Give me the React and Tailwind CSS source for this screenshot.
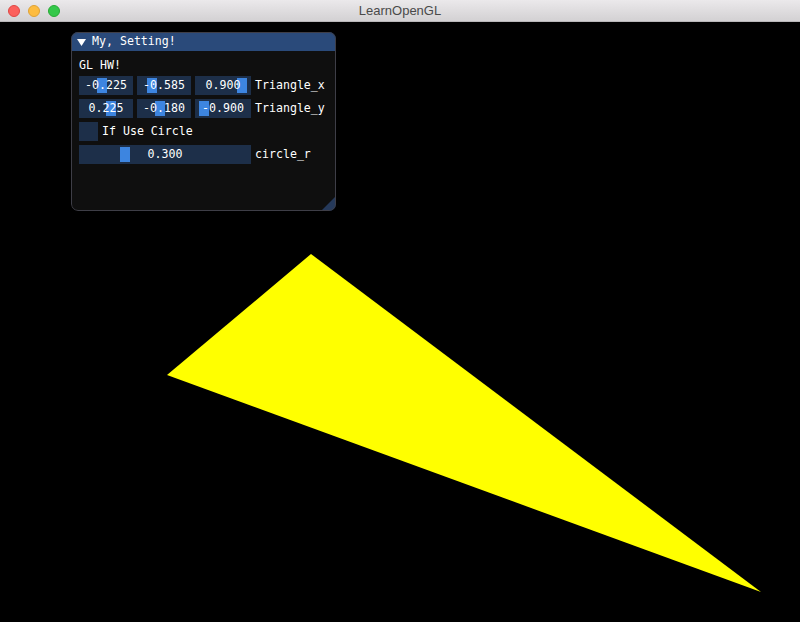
import React from "react";

const mono = { fontFamily: '"DejaVu Sans Mono", "Liberation Mono", monospace' };

function Slider({ width, value, t }) {
  const left = 2 + t * (width - 14);
  return (
    <div className="relative h-[19px] bg-[#1d2f49] shrink-0" style={{ width }}>
      <div className="absolute top-[2px] bottom-[2px] w-[10px] bg-[#3d85e0]" style={{ left }} />
      <div className="relative h-full flex items-center justify-center text-white text-[11.6px] leading-none">
        {value}
      </div>
    </div>
  );
}

function Row3({ vals, label }) {
  return (
    <div className="flex items-center h-[19px]">
      <div className="flex gap-[4px]">
        {vals.map((v, i) => (
          <Slider key={i} width={i === 2 ? 56 : 54} value={v.toFixed(3)} t={(v + 1) / 2} />
        ))}
      </div>
      <span className="ml-[4px] text-white text-[11.6px] leading-none">{label}</span>
    </div>
  );
}

export default function App() {
  return (
    <div className="w-[800px] h-[622px] bg-black flex flex-col overflow-hidden">
      <div className="h-[22px] shrink-0 relative flex items-center justify-center bg-gradient-to-b from-[#ebe9eb] to-[#d3d1d3] border-b border-[#b9b7b9]">
        <div className="absolute left-[8px] top-[5px] flex gap-[8px]">
          <div className="w-[12px] h-[12px] rounded-full bg-[#fc605c] border border-[#df4744]" />
          <div className="w-[12px] h-[12px] rounded-full bg-[#fdbc40] border border-[#dea236]" />
          <div className="w-[12px] h-[12px] rounded-full bg-[#34c84a] border border-[#27aa35]" />
        </div>
        <span className="text-[13px] text-[#4a4a4a] leading-none" style={{ fontFamily: '"Liberation Sans", Arial, sans-serif' }}>
          LearnOpenGL
        </span>
      </div>
      <div className="relative flex-1">
        <svg className="absolute inset-0" width="800" height="600" viewBox="0 0 800 600">
          <polygon points="311,232 167,353 761,570" fill="#ffff00" />
        </svg>
        <div
          className="absolute left-[71px] top-[10px] w-[265px] h-[179px] rounded-[7px] overflow-hidden bg-[#0f0f0f] flex flex-col"
          style={mono}
        >
          <div className="h-[19px] shrink-0 bg-[#2a4a7a] flex items-center pl-[6px]">
            <svg width="9" height="7" viewBox="0 0 9 7" className="mt-[1px]">
              <polygon points="0,0 9,0 4.5,7" fill="#ffffff" />
            </svg>
            <span className="ml-[6px] text-white text-[11.6px] leading-none">My, Setting!</span>
          </div>
          <div className="flex flex-col gap-[4px] pl-[8px] pt-[8px]">
            <div className="h-[13px] flex items-center text-white text-[11.6px] leading-none">GL HW!</div>
            <Row3 vals={[-0.225, -0.585, 0.9]} label="Triangle_x" />
            <Row3 vals={[0.225, -0.18, -0.9]} label="Triangle_y" />
            <div className="flex items-center h-[19px]">
              <div className="w-[19px] h-[19px] bg-[#1d2f49]" />
              <span className="ml-[4px] text-white text-[11.6px] leading-none">If Use Circle</span>
            </div>
            <div className="flex items-center h-[19px]">
              <div className="relative h-[19px] w-[172px] bg-[#1d2f49]">
                <div className="absolute top-[2px] bottom-[2px] w-[10px] bg-[#3d85e0] left-[41px]" />
                <div className="relative h-full flex items-center justify-center text-white text-[11.6px] leading-none">
                  0.300
                </div>
              </div>
              <span className="ml-[4px] text-white text-[11.6px] leading-none">circle_r</span>
            </div>
          </div>
          <svg className="absolute right-0 bottom-0" width="15" height="15" viewBox="0 0 15 15">
            <polygon points="0,15 15,0 15,15" fill="#25395a" />
          </svg>
          <div className="absolute inset-0 rounded-[7px] border border-[#3e3e47] pointer-events-none" />
        </div>
      </div>
    </div>
  );
}
